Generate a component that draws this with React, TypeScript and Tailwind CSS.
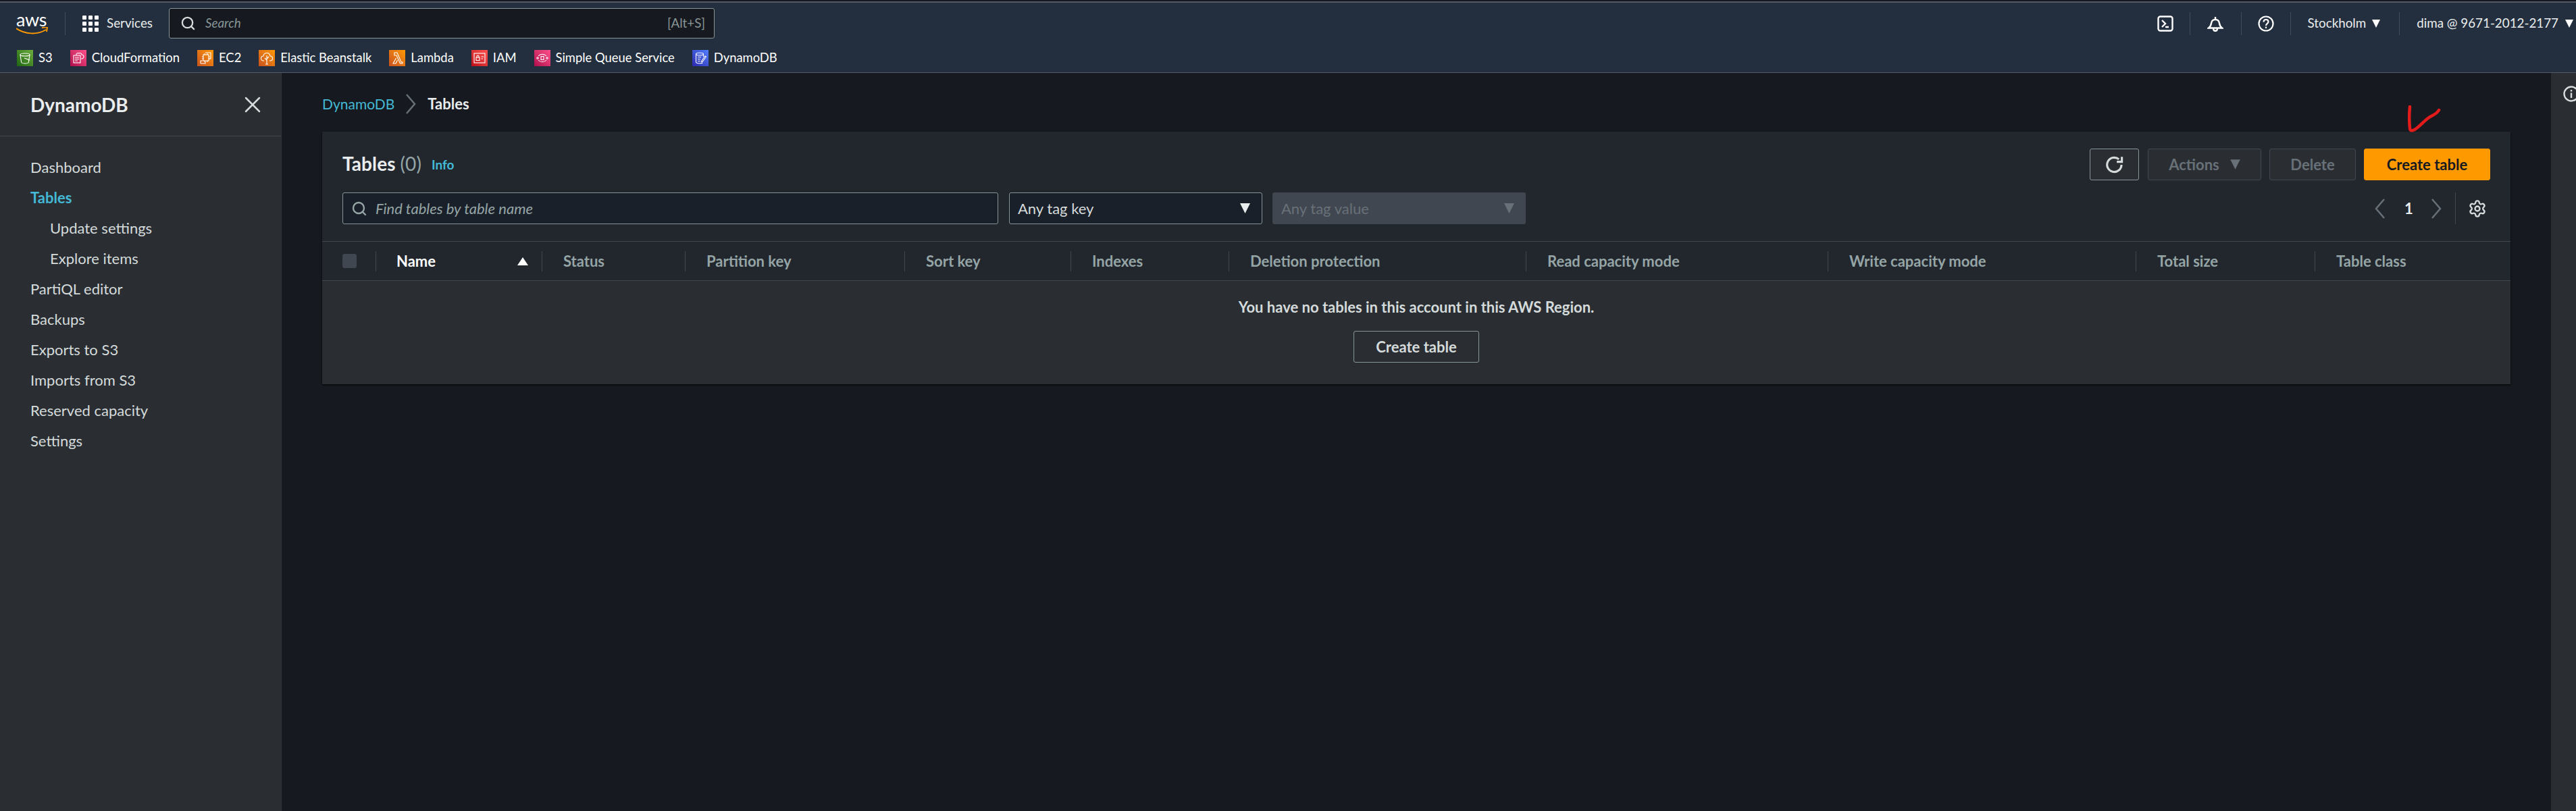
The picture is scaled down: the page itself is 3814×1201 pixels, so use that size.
import { Search, Settings, X } from "lucide-react";
import type { ReactNode } from "react";

function Caret({ className }: { className: string }) {
  return (
    <svg viewBox="0 0 12 14" className={className} fill="currentColor">
      <polygon points="0,1 12,1 6,13" />
    </svg>
  );
}

function Chevron({ left, className }: { left?: boolean; className: string }) {
  return (
    <svg viewBox="0 0 15 30" className={`w-[15px] h-[30px] shrink-0 ${className}`} fill="none" stroke="currentColor" strokeWidth="2.500">
      <path d={left ? "M14 1L2 15l12 14" : "M1 1l12 14L1 29"} />
    </svg>
  );
}

function Tile({ className, children }: { className: string; children: ReactNode }) {
  return (
    <div className={`w-6 h-6 shrink-0 flex items-center justify-center ${className}`}>
      <svg viewBox="0 0 24 24" className="w-6 h-6" fill="none" stroke="#fff" strokeWidth="1.1">
        {children}
      </svg>
    </div>
  );
}

const favorites = [
  {
    label: "S3",
    bg: "bg-linear-to-tr from-[#1b660f] to-[#6cae3e]",
    art: (
      <>
        <ellipse cx="12" cy="7" rx="7" ry="2" />
        <path d="M5 7l1.600 11c.2 1.200 2.600 2 5.400 2s5.200-.8 5.400-2L19 7M11 12l8 3" />
      </>
    ),
  },
  {
    label: "CloudFormation",
    bg: "bg-linear-to-tr from-[#b0084d] to-[#ff4f8b]",
    art: (
      <>
        <path d="M9 8V6.500C9 5 11.500 4 13 5c1-1 4-.5 4 2 2 0 3 1.500 3 3s-1.500 3-3 3h-1" />
        <rect x="5" y="8" width="10" height="11" />
        <path d="M7 11h6M7 13.500h6M7 16h4" />
      </>
    ),
  },
  {
    label: "EC2",
    bg: "bg-linear-to-tr from-[#c8511b] to-[#ff9900]",
    art: (
      <>
        <path d="M8 16H5v4M5 20h7v-3M12 4h8v9h-3" />
        <rect x="9" y="7" width="8" height="9" />
        <path d="M11 5v2M15 5v2M11 16v2M15 16v2M7 10h2M7 13h2M17 10h2M17 13h2" />
      </>
    ),
  },
  {
    label: "Elastic Beanstalk",
    bg: "bg-linear-to-tr from-[#c8511b] to-[#ff9900]",
    art: (
      <path d="M8 16H7c-2 0-3.500-1.500-3.500-3.500S5 9 7 9c.5-3 3-4.500 5-4.500S16.500 6 17 9c2 0 3.500 1.500 3.500 3.500S19 16 17 16h-1M12 8v13M12 15l-3-3M12 13l3-3M10 21h4" />
    ),
  },
  {
    label: "Lambda",
    bg: "bg-linear-to-tr from-[#c8511b] to-[#ff9900]",
    art: <path d="M8 4h4l6 14h2v2h-3.500L11 8H8zM10.500 12L6 20h4l2.500-5" />,
  },
  {
    label: "IAM",
    bg: "bg-linear-to-tr from-[#bd0816] to-[#ff5252]",
    art: (
      <>
        <rect x="4" y="5" width="16" height="14" />
        <rect x="7" y="11" width="5" height="4.500" />
        <path d="M8 11V9.500a1.500 1.500 0 0 1 3 0V11M14.500 10H18M14.500 13H17" />
      </>
    ),
  },
  {
    label: "Simple Queue Service",
    bg: "bg-linear-to-tr from-[#b0084d] to-[#ff4f8b]",
    art: (
      <>
        <path d="M6 9a8 8 0 0 1 12 0M6 15a8 8 0 0 0 12 0" />
        <rect x="10" y="9.500" width="4" height="5" />
        <circle cx="5" cy="12" r="1.200" />
        <circle cx="19" cy="12" r="1.200" />
      </>
    ),
  },
  {
    label: "DynamoDB",
    bg: "bg-linear-to-tr from-[#2e27ad] to-[#527fff]",
    art: (
      <>
        <ellipse cx="11" cy="6" rx="5.500" ry="1.800" />
        <path d="M5.500 6v12c0 1 2.500 1.800 5.500 1.800 2 0 3.500-.3 4.500-.8M16.500 6v4M8 10.500h5M8 13.500h4M8 16.500h4M14 16l5-7 1.500 1-5 7-1.800.6z" />
      </>
    ),
  },
];

const navLinks = [
  { label: "Dashboard" },
  { label: "Tables", active: true },
  { label: "Update settings", sub: true },
  { label: "Explore items", sub: true },
  { label: "PartiQL editor" },
  { label: "Backups" },
  { label: "Exports to S3" },
  { label: "Imports from S3" },
  { label: "Reserved capacity" },
  { label: "Settings" },
];

const columns = [
  "Status",
  "Partition key",
  "Sort key",
  "Indexes",
  "Deletion protection",
  "Read capacity mode",
  "Write capacity mode",
  "Total size",
  "Table class",
];

function NavDivider() {
  return <div className="w-px h-[34px] bg-[#414d5c] shrink-0" />;
}

function TopBar() {
  return (
    <header className="shrink-0 bg-[#232f3e] border-b border-[#545b64]">
      <div className="h-[2px] bg-[#16191f]" />
      <div className="h-[2px] bg-[#545b64]" />
      <div className="flex items-center h-[45px] mt-[8px] pl-[24px] pr-[4px] text-[18.8px] text-[#eaeded]">
        <div className="w-[48px] h-[34px] relative shrink-0">
          <span className="block text-[27px] leading-[22px] tracking-[-0.3px] text-white">aws</span>
          <svg viewBox="0 0 48 12" className="absolute left-0 top-[22px] w-[48px] h-[12px]" fill="none">
            <path d="M0 2c13 9 31 10 44 2" stroke="#ff9900" strokeWidth="2" />
            <path d="M38 1l8-1-1 7" stroke="#ff9900" strokeWidth="2" />
          </svg>
        </div>
        <div className="ml-[24px]"><NavDivider /></div>
        <svg viewBox="0 0 24 24" className="w-6 h-6 ml-[25px] shrink-0" fill="#fff">
          {[0, 9, 18].map((y) =>
            [0, 9, 18].map((x) => <rect key={`${x}-${y}`} x={x} y={y} width="6" height="6" rx="1" />)
          )}
        </svg>
        <span className="ml-[12px] w-[67px]">Services</span>
        <div className="ml-[25px] w-[808px] h-[45px] rounded-[3px] border border-[#879596] bg-[#16191f] flex items-center pl-[16px] pr-[13px]">
          <Search className="w-[23px] h-[23px] text-[#d5dbdb]" strokeWidth={2.4} />
          <span className="ml-[14px] italic text-[#879596]">Search</span>
          <span className="ml-auto text-[#879596]">[Alt+S]</span>
        </div>
        <div className="ml-auto flex items-center">
          <svg viewBox="0 0 24 24" className="w-6 h-6" fill="none" stroke="#fff" strokeWidth="2.400">
            <rect x="1.500" y="1.500" width="21" height="21" rx="3" />
            <path d="M7 7l5 5-5 5M12 17h5" />
          </svg>
          <div className="ml-[24px]"><NavDivider /></div>
          <svg viewBox="0 0 24 24" className="w-6 h-6 ml-[25px]" fill="none" stroke="#fff" strokeWidth="2.400">
            <path d="M2 18.500c2-1.500 3.500-3 4-7 .4-3.500 3-5.500 6-5.500s5.600 2 6 5.500c.5 4 2 5.500 4 7z" />
            <path d="M12 2v4M9 19c0 5 6 5 6 0" />
          </svg>
          <div className="ml-[26px]"><NavDivider /></div>
          <svg viewBox="0 0 24 24" className="w-6 h-6 ml-[24px]" fill="none" stroke="#fff" strokeWidth="2.200">
            <circle cx="12" cy="12" r="10.500" />
            <path d="M8.500 9.500C8.500 7 10 6 12 6s3.500 1.200 3.500 3.200c0 2.800-3.500 2.600-3.500 5.800M12 16.500v2.500" />
          </svg>
          <div className="ml-[24px]"><NavDivider /></div>
          <span className="ml-[25px]">Stockholm</span>
          <Caret className="w-[12px] h-[14px] ml-[9px] text-white" />
          <div className="ml-[28px]"><NavDivider /></div>
          <span className="ml-[25px]">dima @ 9671-2012-2177</span>
          <Caret className="w-[12px] h-[14px] ml-[10px] text-white" />
        </div>
      </div>
      <div className="flex items-center h-[24px] mt-[17px] mb-[9px] pl-[25px] text-[18.4px] text-white">
        {favorites.map((item) => (
          <div key={item.label} className="flex items-center mr-[26px]">
            <Tile className={item.bg}>{item.art}</Tile>
            <span className="ml-[8px]">{item.label}</span>
          </div>
        ))}
      </div>
    </header>
  );
}

function Sidebar() {
  return (
    <aside className="w-[417px] shrink-0 bg-[#2a2e33] border-r border-[#2f343a]">
      <div className="h-[94px] border-b border-[#414750] flex items-center justify-between pl-[45px] pr-[22px]">
        <span className="text-[28px] font-bold text-[#eaeded]">DynamoDB</span>
        <X className="w-[40px] h-[40px] text-[#d5dbdb]" strokeWidth={1.500} />
      </div>
      <nav className="pt-[23px] flex flex-col">
        {navLinks.map((link) => (
          <a
            key={link.label}
            className={`h-[45px] flex items-center text-[22px] ${link.sub ? "pl-[74px]" : "pl-[45px]"} ${
              link.active ? "text-[#44b9d6] font-bold" : "text-[#d5dbdb]"
            }`}
          >
            {link.label}
          </a>
        ))}
      </nav>
    </aside>
  );
}

function ToolbarButton({ children, className }: { children: ReactNode; className: string }) {
  return (
    <button className={`h-[47px] rounded-[3px] border flex items-center justify-center text-[22px] font-bold ${className}`}>
      {children}
    </button>
  );
}

function TablesPanel() {
  return (
    <section className="relative shadow-[0_1px_2px_#000]">
      <svg viewBox="0 0 56 42" className="absolute left-[3088px] top-[-39px] w-[56px] h-[42px]" fill="none">
        <path
          d="M3 2c-1 10-1 22 0 32 .4 4 3 4 7 2 7-4 12-11 20-17 5-4 12-5 16-12"
          stroke="#e31b1b"
          strokeWidth="4.500"
          strokeLinecap="round"
        />
      </svg>

      <div className="bg-[#22272e] pt-[25px] pb-[25px] pl-[30px] pr-[30px] border-b border-[#414750]">
        <div className="flex items-center h-[47px]">
          <h2 className="mb-[4px] text-[28px] font-bold text-[#eaeded] tracking-[0.1px]">
            Tables <span className="font-normal text-[#95a5a6]">(0)</span>
          </h2>
          <a className="ml-[15px] mt-[2px] text-[19px] font-bold text-[#44b9d6]">Info</a>
          <div className="ml-auto flex items-center gap-[12px]">
            <ToolbarButton className="w-[73px] mr-[1px] bg-[#2a2e33] border-[#879596] text-[#d5dbdb]">
              <svg viewBox="0 0 24 24" className="w-[30px] h-[30px]" fill="none" stroke="#d5dbdb" strokeWidth="2.500">
                <path d="M20 12a8.500 8.500 0 1 1-3-6.500" />
                <path d="M20.500 2.500v6h-6" />
              </svg>
            </ToolbarButton>
            <ToolbarButton className="w-[168px] bg-[#2a2e33] border-[#414750] text-[#687078]">
              Actions
              <Caret className="w-[15px] h-[17px] ml-[16px]" />
            </ToolbarButton>
            <ToolbarButton className="w-[128px] bg-[#2a2e33] border-[#414750] text-[#687078]">Delete</ToolbarButton>
            <ToolbarButton className="w-[187px] bg-[#ff9900] border-[#ff9900] text-[#16191f]">Create table</ToolbarButton>
          </div>
        </div>

        <div className="flex items-center h-[47px] mt-[18px]">
          <div className="w-[971px] h-full rounded-[3px] border border-[#879596] bg-[#1a2029] flex items-center pl-[12px]">
            <Search className="w-[24px] h-[24px] text-[#95a5a6]" strokeWidth={2.400} />
            <span className="ml-[12px] text-[22px] italic text-[#95a5a6]">Find tables by table name</span>
          </div>
          <div className="ml-[16px] w-[375px] h-full rounded-[3px] border border-[#879596] bg-[#1a2029] flex items-center justify-between pl-[12px] pr-[17px] text-[22px] text-[#d5dbdb]">
            Any tag key
            <Caret className="w-[15px] h-[21px] text-[#eaeded]" />
          </div>
          <div className="ml-[15px] w-[375px] h-full rounded-[3px] bg-[#414750] flex items-center justify-between pl-[13px] pr-[17px] text-[22px] text-[#687078]">
            Any tag value
            <Caret className="w-[15px] h-[21px] text-[#687078]" />
          </div>
          <div className="ml-auto flex items-center">
            <Chevron left className="text-[#687078]" />
            <span className="ml-[29px] w-[10px] text-[22px] font-bold text-[#eaeded]">1</span>
            <Chevron className="ml-[30px] text-[#687078]" />
            <div className="ml-[20px] w-px h-[47px] bg-[#414750]" />
            <Settings className="ml-[18px] mr-[5px] w-[28px] h-[28px] text-[#d5dbdb]" strokeWidth={2} />
          </div>
        </div>
      </div>

      <div className="h-[58px] bg-[#22272e] border-b border-[#414750] grid grid-cols-[79px_246px_212px_325px_246px_234px_440px_447px_456px_265px_1fr] items-center text-[22px] font-bold text-[#95a5a6]">
        <div className="pl-[30px]">
          <div className="w-[21px] h-[21px] rounded-[3px] bg-[#414750]" />
        </div>
        <div className="h-[30px] border-l border-[#414750] pl-[30px] pr-[20px] flex items-center justify-between text-white">
          Name
          <svg viewBox="0 0 16 12" className="w-[16px] h-[12px]" fill="#fff">
            <polygon points="8,0 16,12 0,12" />
          </svg>
        </div>
        {columns.map((col) => (
          <div key={col} className="h-[30px] border-l border-[#414750] pl-[31px] flex items-center whitespace-nowrap">
            {col}
          </div>
        ))}
      </div>

      <div className="h-[153px] bg-[#2a2e33] flex flex-col items-center pt-[27px]">
        <p className="text-[22px] leading-[24px] font-bold text-[#d5dbdb]">
          You have no tables in this account in this AWS Region.
        </p>
        <button className="mt-[23px] w-[186px] h-[47px] rounded-[3px] border border-[#879596] text-[22px] font-bold text-[#d5dbdb]">
          Create table
        </button>
      </div>
    </section>
  );
}

export default function App() {
  return (
    <div className="h-screen flex flex-col overflow-hidden bg-[#16191f] font-['Lato','Liberation_Sans',sans-serif]">
      <TopBar />
      <div className="flex flex-1 min-h-0">
        <Sidebar />
        <main className="flex-1 min-w-0 pl-[60px] pr-[60px]">
          <div className="h-[87px] pt-[4px] flex items-center">
            <a className="text-[21px] text-[#44b9d6]">DynamoDB</a>
            <Chevron className="mx-[17px] text-[#687078]" />
            <span className="text-[22px] font-bold text-[#eaeded]">Tables</span>
          </div>
          <TablesPanel />
        </main>
        <aside className="w-[37px] shrink-0 bg-[#2a2e33] pl-[18px] pt-[19px] overflow-hidden">
          <svg viewBox="0 0 24 24" className="w-6 h-6" fill="none" stroke="#d5dbdb" strokeWidth="2.400">
            <circle cx="12" cy="12" r="10.500" />
            <path d="M12 10.500V18M12 6v2.500" />
          </svg>
        </aside>
      </div>
    </div>
  );
}
